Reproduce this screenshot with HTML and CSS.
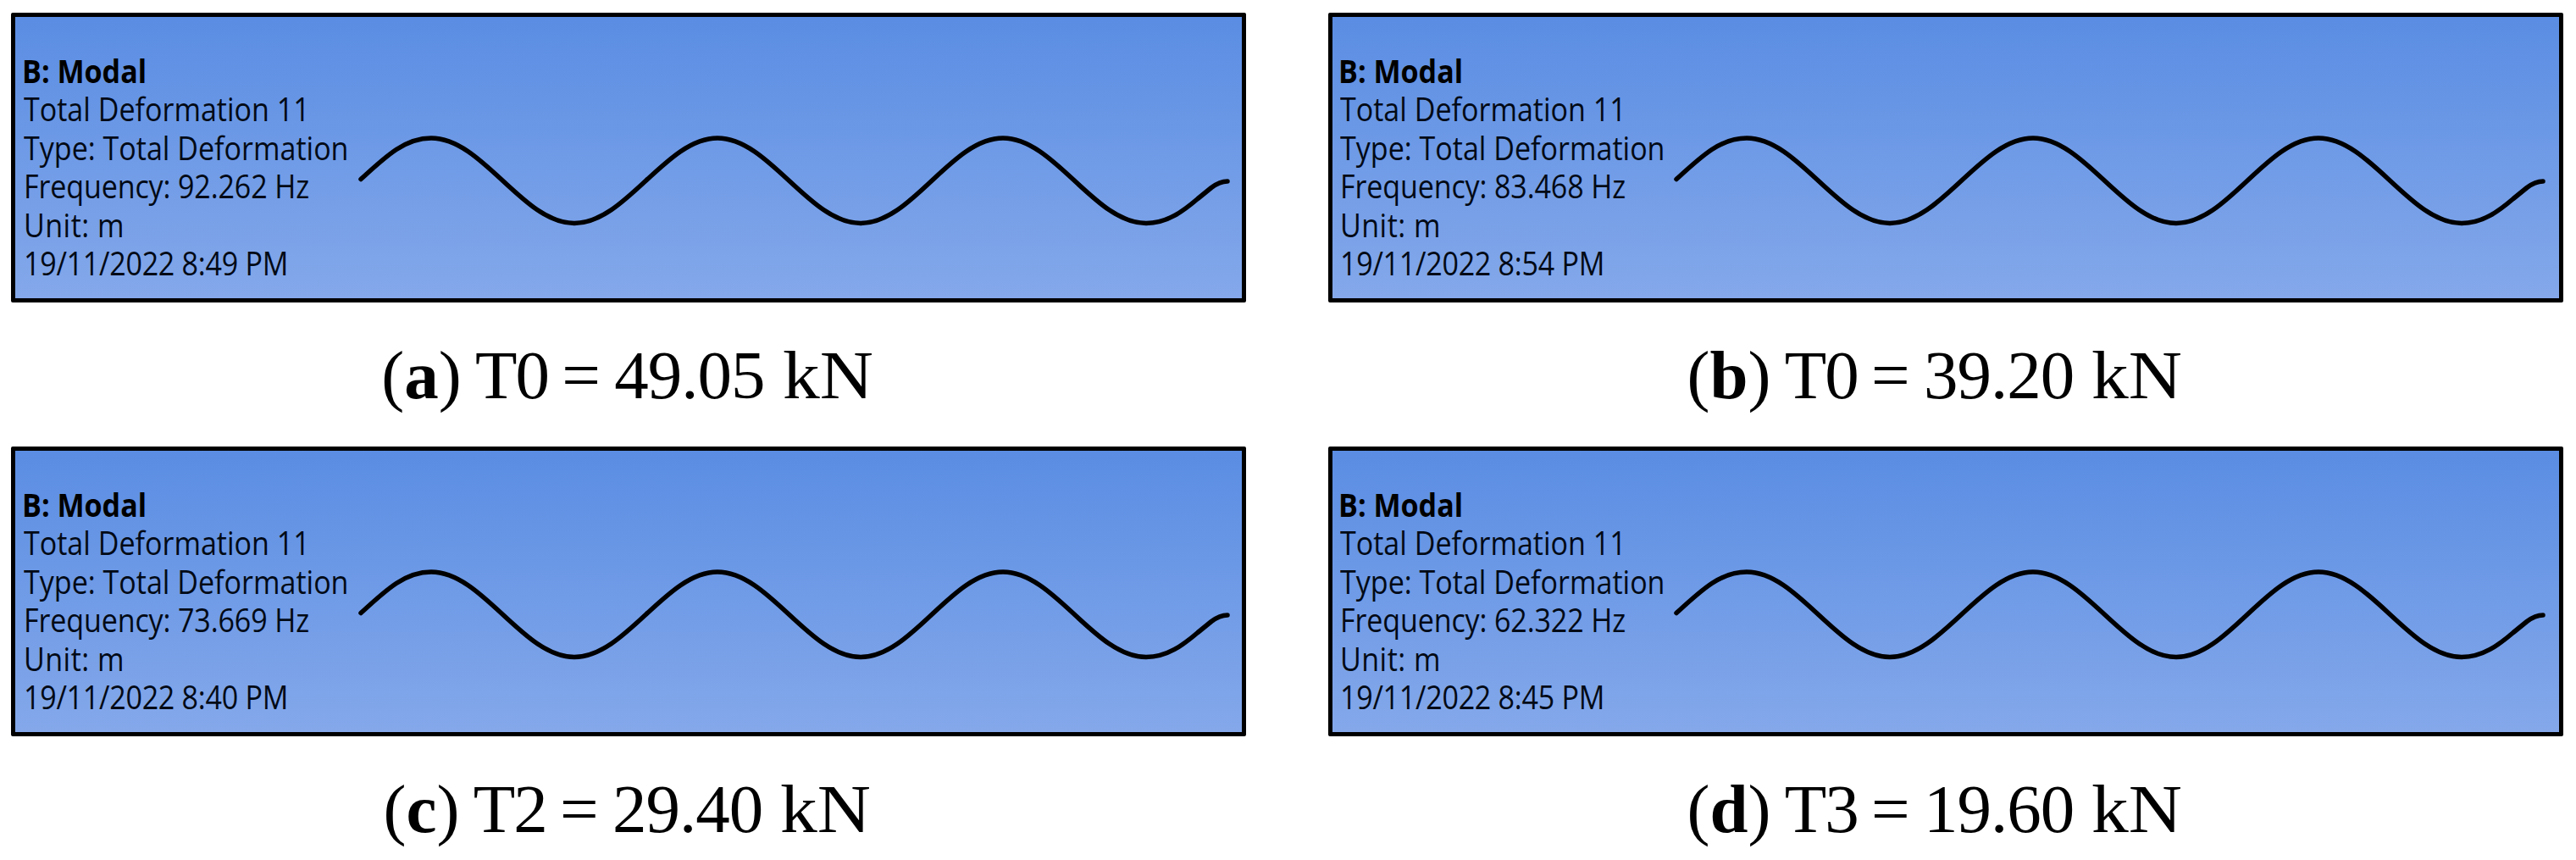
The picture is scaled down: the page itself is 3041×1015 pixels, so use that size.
FILE: index.html
```
<!DOCTYPE html>
<html lang="en">
<head>
    <meta charset="UTF-8">
    <meta name="viewport" content="width=device-width, initial-scale=1.0">
    <title>Total Deformation</title>
    <link rel="stylesheet" href="styles.css">
</head>
<body>
    <!-- mode shape, shared by all four plots -->
    <svg class="defs" width="0" height="0">
        <symbol id="wave" viewBox="0 0 1048 332">
            <path d="M8 191.5 C38 164 60 143 91 143 C152 143 199 243.5 260 243.5 C321 243.5 368 143 429 143 C490 143 537 243.5 598 243.5 C659 243.5 705 143 766 143 C827 143 874 243.5 935 243.5 C960 243.5 979 229 996 214.5 L1012 201.5 Q1022 194 1031 194"/>
        </symbol>
    </svg>

    <div class="figure">
        <div class="item">
            <div class="plot">
                <div class="info">
                    <div class="title">B: Modal</div>
                    <div>Total Deformation 11</div>
                    <div>Type: Total Deformation</div>
                    <div class="freq">Frequency: 92.262 Hz</div>
                    <div class="unit">Unit: m</div>
                    <div class="date">19/11/2022 8:49 PM</div>
                </div>
                <svg class="wave"><use href="#wave"/></svg>
            </div>
            <div class="caption">(<b>a</b>) <span class="name">T0</span> = <span class="num">49.05</span> <span class="kn">kN</span></div>
        </div>

        <div class="item right">
            <div class="plot">
                <div class="info">
                    <div class="title">B: Modal</div>
                    <div>Total Deformation 11</div>
                    <div>Type: Total Deformation</div>
                    <div class="freq">Frequency: 83.468 Hz</div>
                    <div class="unit">Unit: m</div>
                    <div class="date">19/11/2022 8:54 PM</div>
                </div>
                <svg class="wave"><use href="#wave"/></svg>
            </div>
            <div class="caption">(<b>b</b>) <span class="name">T0</span> = <span class="num">39.20</span> <span class="kn">kN</span></div>
        </div>

        <div class="item">
            <div class="plot">
                <div class="info">
                    <div class="title">B: Modal</div>
                    <div>Total Deformation 11</div>
                    <div>Type: Total Deformation</div>
                    <div class="freq">Frequency: 73.669 Hz</div>
                    <div class="unit">Unit: m</div>
                    <div class="date">19/11/2022 8:40 PM</div>
                </div>
                <svg class="wave"><use href="#wave"/></svg>
            </div>
            <div class="caption">(<b>c</b>) <span class="name">T2</span> = <span class="num">29.40</span> <span class="kn">kN</span></div>
        </div>

        <div class="item right">
            <div class="plot">
                <div class="info">
                    <div class="title">B: Modal</div>
                    <div>Total Deformation 11</div>
                    <div>Type: Total Deformation</div>
                    <div class="freq">Frequency: 62.322 Hz</div>
                    <div class="unit">Unit: m</div>
                    <div class="date">19/11/2022 8:45 PM</div>
                </div>
                <svg class="wave"><use href="#wave"/></svg>
            </div>
            <div class="caption">(<b>d</b>) <span class="name">T3</span> = <span class="num">19.60</span> <span class="kn">kN</span></div>
        </div>
    </div>
</body>
</html>
```
FILE: styles.css
```
body {
    margin: 0;
    background-color: #fff;
    color: #000;
    overflow: hidden;
}
.defs {
    display: block;
}
.figure {
    display: grid;
    grid-template-columns: 1458px 1458px;
    column-gap: 97px;
    padding: 15px 0 0 13px;
}
.plot {
    display: grid;
    grid-template-columns: 400px 1048px;
    height: 332px;
    border: 5px solid #000;
    border-radius: 2px;
    background: linear-gradient(#5a8de3, #84a8ea);
}
.right .plot {
    grid-template-columns: 398px 1050px;
}
.info {
    padding: 41px 0 0 10px;
    font-family: "Open Sans", "Noto Sans", sans-serif;
    font-size: 38px;
    line-height: 45.4px;
    white-space: nowrap;
    color: #020a16;
}
.right .info {
    padding-left: 9px;
}
/* narrow the letters a little */
.info div {
    transform: scaleX(0.896);
    transform-origin: left;
}
.info .title {
    margin-left: -2px;
    font-weight: bold;
    color: #000;
}
.info .freq {
    letter-spacing: -0.15px;
}
.info .unit {
    letter-spacing: 0.5px;
}
.info .date {
    letter-spacing: -0.3px;
}
.wave {
    display: block;
    width: 1048px;
    height: 332px;
    fill: none;
    stroke: #000;
    stroke-width: 5.5;
    stroke-linecap: round;
    stroke-linejoin: round;
}
.caption {
    height: 170px;
    font-family: "Liberation Serif", serif;
    font-size: 81px;
    line-height: 172px;
    text-align: center;
    word-spacing: -4px;
    white-space: nowrap;
}
.item .caption {
    padding-right: 3px;
}
.right .caption {
    padding-right: 26px;
}
.name {
    letter-spacing: -2px;
}
.num {
    letter-spacing: -1px;
}
.kn {
    display: inline-block;
    margin: 0 8px 0 5px;
    transform: scaleX(1.08);
    transform-origin: left;
}
```
